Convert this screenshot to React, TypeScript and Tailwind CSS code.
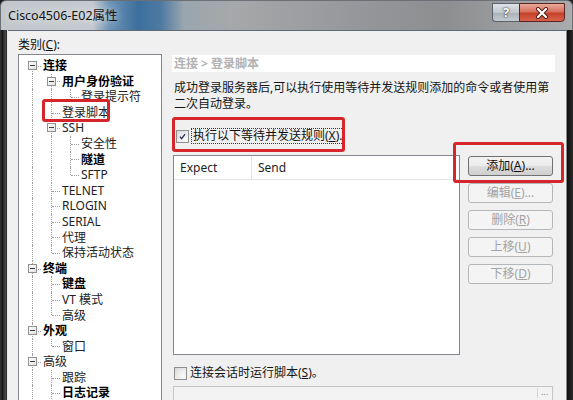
import React from "react";

type Row = {
  label: string;
  guides: boolean[];
  bold?: boolean;
  exp?: boolean;
  last?: boolean;
  first?: boolean;
};

const rows: Row[] = [
  { label: "连接", guides: [], bold: true, exp: true, first: true },
  { label: "用户身份验证", guides: [true], bold: true, exp: true },
  { label: "登录提示符", guides: [true, true], last: true },
  { label: "登录脚本", guides: [true] },
  { label: "SSH", guides: [true], exp: true },
  { label: "安全性", guides: [true, true] },
  { label: "隧道", guides: [true, true], bold: true },
  { label: "SFTP", guides: [true, true], last: true },
  { label: "TELNET", guides: [true] },
  { label: "RLOGIN", guides: [true] },
  { label: "SERIAL", guides: [true] },
  { label: "代理", guides: [true] },
  { label: "保持活动状态", guides: [true], last: true },
  { label: "终端", guides: [], bold: true, exp: true },
  { label: "键盘", guides: [true], bold: true },
  { label: "VT 模式", guides: [true] },
  { label: "高级", guides: [true], last: true },
  { label: "外观", guides: [], bold: true, exp: true },
  { label: "窗口", guides: [true], last: true },
  { label: "高级", guides: [], exp: true },
  { label: "跟踪", guides: [true] },
  { label: "日志记录", guides: [true], bold: true },
];

const TreeRow = ({ row }: { row: Row }) => {
  let vertical = "top-0 bottom-0";
  if (row.first) vertical = "top-1/2 bottom-0";
  if (row.last) vertical = "top-0 bottom-1/2";
  return (
    <div className="flex h-[15.6px] shrink-0 items-stretch">
      {row.guides.map((g, i) => (
        <span key={i} className="relative w-[19px] shrink-0">
          {g && (
            <span className="absolute left-[9px] top-0 bottom-0 border-l border-dotted border-[#a0a0a0]" />
          )}
        </span>
      ))}
      <span className="relative w-[19px] shrink-0">
        <span className={`absolute left-[9px] border-l border-dotted border-[#a0a0a0] ${vertical}`} />
        <span className="absolute left-[10px] top-1/2 w-[8px] border-t border-dotted border-[#a0a0a0]" />
        {row.exp && (
          <span className="absolute left-[5px] top-[3px] flex h-[9px] w-[9px] items-center justify-center border border-[#919191] bg-[linear-gradient(135deg,#ffffff,#e2e2e2)]">
            <span className="h-px w-[5px] bg-[#3c3c3c]" />
          </span>
        )}
      </span>
      <span
        className={`whitespace-nowrap px-px text-[12px] leading-[15.6px] ${
          row.bold ? "font-bold text-black" : "text-[#222]"
        }`}
      >
        {row.label}
      </span>
    </div>
  );
};

const Check = ({ checked }: { checked?: boolean }) => (
  <span className="flex h-[13px] w-[13px] shrink-0 items-center justify-center border border-[#8e8f8f] bg-[linear-gradient(135deg,#d8d8d8,#fbfbfb)] p-[2px]">
    <span className="flex h-full w-full items-center justify-center bg-[linear-gradient(135deg,#e4e4e4,#fafafa)]">
      {checked && (
        <svg width="9" height="9" viewBox="0 0 9 9">
          <path d="M1.2 4.6 L3.4 7.2 L7.8 1.4" fill="none" stroke="#23325a" strokeWidth="1.7" />
        </svg>
      )}
    </span>
  </span>
);

const Btn = ({ text, mn, tail, enabled }: { text: string; mn: string; tail: string; enabled?: boolean }) => (
  <div
    className={`flex h-[20px] shrink-0 items-center justify-center rounded-[3px] border text-[12px] leading-none ${
      enabled
        ? "border-[#707070] bg-[linear-gradient(#f3f3f3,#ebebeb_50%,#dddddd_51%,#cfcfcf)] text-[#111]"
        : "border-[#b4b7ba] bg-[#f4f4f4] text-[#a3a3a3]"
    }`}
  >
    {text}(<u>{mn}</u>){tail}
  </div>
);

export default function App() {
  return (
    <div className="relative flex h-[400px] w-[573px] flex-col overflow-hidden bg-[#1c1c1c] font-['Noto_Sans','Noto_Sans_CJK_SC',sans-serif] text-[12px] text-black">
      {/* Title bar */}
      <div className="flex h-[30px] shrink-0 items-start rounded-t-[6px] border border-b-0 border-[#6b7077] bg-[linear-gradient(90deg,#c3c7cb_0%,#c5cace_16%,#6d93b6_19%,#3d6f9d_24%,#4e7aa2_28%,#9aa5ae_32%,#a6a8aa_40%,#96979a_62%,#8d8e90_78%,#a9abad_100%)]">
        <span className="ml-[7px] mt-[6px] text-[12.5px] leading-[18px] text-[#141414] [text-shadow:0_0_8px_rgba(255,255,255,0.95)]">
          Cisco4506-E02属性
        </span>
        <div className="ml-auto mr-[7px] mt-[2px] flex">
          <div className="flex h-[19px] w-[27px] items-center justify-center rounded-bl-[4px] border border-r-0 border-[#59626c] bg-[linear-gradient(#dfe3e7,#bfc6cc_50%,#a9b1b8_51%,#c3cad0)]">
            <span className="text-[13px] font-bold leading-none text-white [text-shadow:0_0_2px_#2a3038,0_0_1px_#2a3038]">?</span>
          </div>
          <div className="flex h-[19px] w-[46px] items-center justify-center rounded-br-[4px] border border-[#5a2520] bg-[linear-gradient(#e9a99c,#d7705d_45%,#c4412b_55%,#d9624a)]">
            <svg width="14" height="12" viewBox="0 0 14 12">
              <path d="M3 2 L11 10 M11 2 L3 10" stroke="#4a1a14" strokeWidth="4" strokeLinecap="round" />
              <path d="M3 2 L11 10 M11 2 L3 10" stroke="#ffffff" strokeWidth="2.2" strokeLinecap="round" />
            </svg>
          </div>
        </div>
      </div>

      <div className="flex min-h-0 flex-1">
        {/* left frame */}
        <div className="w-[8px] shrink-0 border-r border-[#e9e9e9] bg-[linear-gradient(90deg,#3b3b3b,#161616_35%,#4b4b4b_75%,#262626)]" />

        {/* client */}
        <div className="flex min-w-0 flex-1 border-t border-[#606a74] bg-[#f0f0f0] pl-[10px] pr-[11px]">
          {/* left column */}
          <div className="flex w-[144px] shrink-0 flex-col">
            <div className="mb-px mt-[6px] h-[16px] shrink-0 text-[12px] leading-[16px] text-[#111]">
              类别(<u>C</u>):
            </div>
            <div className="h-[360px] shrink-0 border border-[#828790] bg-white pl-[4px] pt-[3px]">
              {rows.map((r, i) => (
                <TreeRow key={i} row={r} />
              ))}
            </div>
          </div>

          {/* right column */}
          <div className="ml-[10px] flex min-w-0 flex-1 flex-col pt-[24px]">
            <div className="h-[17px] shrink-0 bg-white pl-[2px] text-[12px] font-bold leading-[17px] text-[#b2b2b2]">
              连接 &gt; 登录脚本
            </div>
            <div className="mt-[8px] shrink-0 whitespace-nowrap pl-[2px] text-[12px] leading-[16px] text-[#151515]">
              成功登录服务器后,可以执行使用等待并发送规则添加的命令或者使用第
              <br />
              二次自动登录。
            </div>

            <div className="mt-[16px] flex h-[16px] shrink-0 items-center pl-[4px]">
              <Check checked />
              <span className="ml-[2px] border border-dotted border-[#333] px-px text-[12px] leading-[14px] text-[#111]">
                执行以下等待并发送规则(<u>X</u>).
              </span>
            </div>

            <div className="mt-[11px] flex h-[200px] shrink-0 gap-[8px]">
              <div className="ml-px flex-1 border border-[#828790] bg-white">
                <div className="flex h-[24px] items-center border-b border-[#e5e5e5] text-[12px] text-[#1e1e1e]">
                  <span className="flex h-full w-[78px] items-center border-r border-[#e5e5e5] pl-[6px]">Expect</span>
                  <span className="pl-[6px]">Send</span>
                </div>
              </div>
              <div className="mr-[2px] mt-px flex w-[85px] flex-col gap-[7px]">
                <Btn text="添加" mn="A" tail="..." enabled />
                <Btn text="编辑" mn="E" tail="..." />
                <Btn text="删除" mn="R" tail="" />
                <Btn text="上移" mn="U" tail="" />
                <Btn text="下移" mn="D" tail="" />
              </div>
            </div>

            <div className="mt-[10px] flex h-[16px] shrink-0 items-center pl-[2px]">
              <Check />
              <span className="ml-[3px] text-[12px] leading-[16px] text-[#151515]">
                连接会话时运行脚本(<u>S</u>)。
              </span>
            </div>

            <div className="ml-px mr-[2px] mt-[5px] flex h-[22px] shrink-0 justify-end border border-[#c3c5c8] bg-[#f3f3f3]">
              <span className="mr-[1px] mt-[1px] flex h-[10px] w-[14px] items-start justify-center border-l border-[#d6d6d6] text-[9px] leading-[8px] text-[#8a8a8a]">
                ...
              </span>
            </div>
          </div>
        </div>

        {/* right frame */}
        <div className="w-[7px] shrink-0 border-l border-[#8a8a8a] bg-[linear-gradient(90deg,#0c0c0c,#1a1a1a_40%,#2c2c2c)]" />
      </div>

      {/* annotation boxes */}
      <div className="absolute left-[42px] top-[99px] h-[23px] w-[68px] rounded-[3px] border-[3px] border-[#d7262b]" />
      <div className="absolute left-[172px] top-[117px] h-[35px] w-[173px] rounded-[3px] border-[3px] border-[#d7262b]" />
      <div className="absolute left-[453px] top-[142px] h-[41px] w-[111px] rounded-[3px] border-[3px] border-[#d7262b]" />
    </div>
  );
}
